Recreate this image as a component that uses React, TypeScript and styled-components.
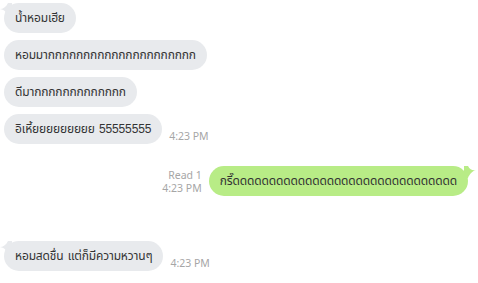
import { createGlobalStyle, styled } from 'styled-components';

const GlobalStyle = createGlobalStyle`
  html, body {
    margin: 0;
    padding: 0;
    background: #ffffff;
  }
  body {
    font-family: 'Liberation Sans', 'Noto Sans Thai', 'Noto Sans', Tahoma, sans-serif;
  }
`;

const Chat = styled.div`
  display: flex;
  flex-direction: column;
  gap: 7px;
  padding: 3px 0 0 0;
  width: 478px;
`;

const Row = styled.div<{ $mine?: boolean; $space?: number }>`
  display: flex;
  align-items: flex-end;
  justify-content: ${(p) => (p.$mine ? 'flex-end' : 'flex-start')};
  gap: 7px;
  padding: ${(p) => (p.$mine ? '0 10px 0 0' : '0 0 0 4px')};
  margin-top: ${(p) => p.$space ?? 0}px;
`;

const Bubble = styled.div<{ $mine?: boolean }>`
  position: relative;
  height: 30px;
  display: flex;
  align-items: center;
  padding: 0 11px;
  border-radius: 15px;
  background: ${(p) => (p.$mine ? '#b8ec86' : '#e8eaed')};
  color: #333;
  font-size: 12px;
  letter-spacing: -0.15px;
  word-spacing: 1px;
  white-space: nowrap;
`;

const Tail = styled.svg<{ $mine?: boolean }>`
  position: absolute;
  top: 0;
  width: 12px;
  height: 12px;
  ${(p) => (p.$mine ? 'right: -8px;' : 'left: -4px;')}
`;

const Meta = styled.div`
  display: flex;
  flex-direction: column;
  align-items: flex-end;
  font-family: 'Noto Sans', sans-serif;
  font-size: 10.5px;
  line-height: 13px;
  color: #a6a6a6;
  padding-bottom: 1px;
`;

function LeftTail() {
  return (
    <Tail viewBox="0 0 12 12">
      <path d="M0 6 C3 6 6 4 8 0 L12 0 L12 12 L7 12 C7 10 5 7 0 6 Z" fill="#e8eaed" />
    </Tail>
  );
}

function RightTail() {
  return (
    <Tail $mine viewBox="0 0 12 12">
      <path d="M12 4 C9 5 6 4 4 0 L0 0 L0 12 L4 12 C5 9 8 5 12 4 Z" fill="#b8ec86" />
    </Tail>
  );
}

const messages = [
  { text: 'น้ำหอมเฮีย', tail: true },
  { text: 'หอมมากกกกกกกกกกกกกกกกกกกกก' },
  { text: 'ดีมากกกกกกกกกกกกก' },
  { text: 'อิเหี้ยยยยยยยยย 55555555', time: '4:23 PM' },
];

export default function App() {
  return (
    <>
      <GlobalStyle />
      <Chat>
        {messages.map((m) => (
          <Row key={m.text}>
            <Bubble>
              {m.tail && <LeftTail />}
              {m.text}
            </Bubble>
            {m.time && <Meta>{m.time}</Meta>}
          </Row>
        ))}
        <Row $mine $space={15}>
          <Meta>
            <span>Read 1</span>
            <span>4:23 PM</span>
          </Meta>
          <Bubble $mine>
            <RightTail />
            กรี๊ดดดดดดดดดดดดดดดดดดดดดดดดดดดดดดด
          </Bubble>
        </Row>
        <Row $space={38}>
          <Bubble>
            <LeftTail />
            หอมสดชื่น แต่ก็มีความหวานๆ
          </Bubble>
          <Meta>4:23 PM</Meta>
        </Row>
      </Chat>
    </>
  );
}
